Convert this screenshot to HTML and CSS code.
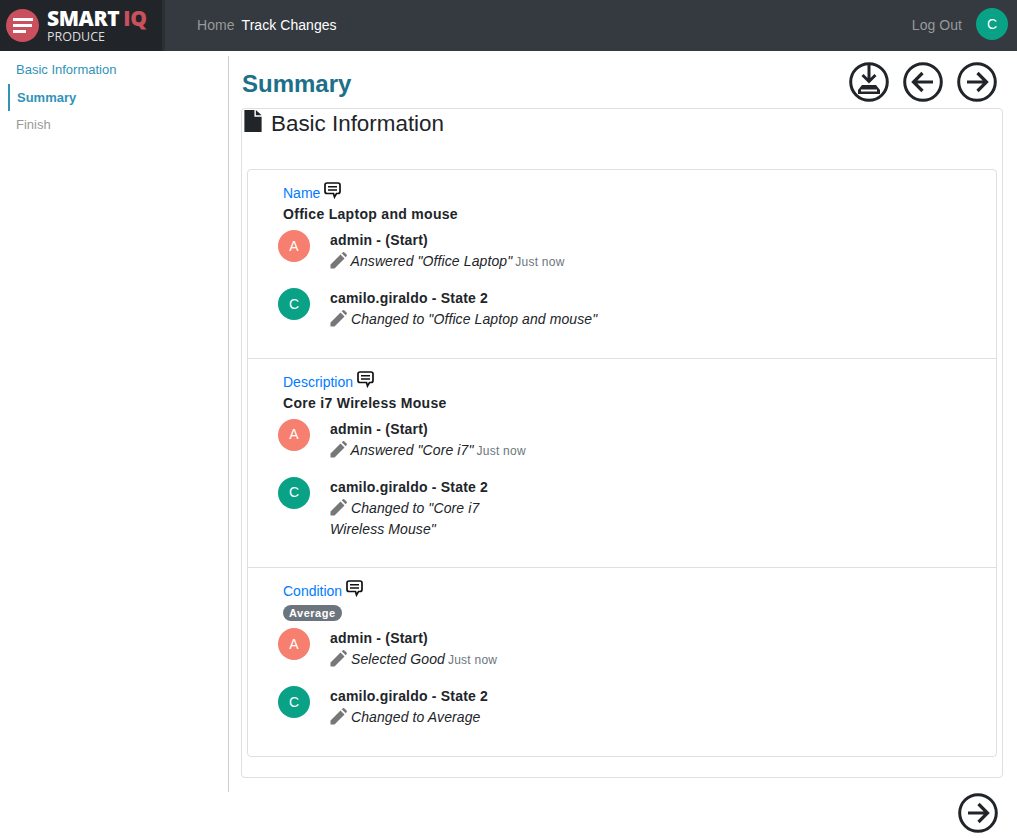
FILE: index.html
```html
<!DOCTYPE html>
<html lang="en">
<head>
<meta charset="utf-8">
<title>Track Changes</title>
<link rel="stylesheet" href="styles.css">
</head>
<body>
<svg class="defs" width="0" height="0" aria-hidden="true">
  <symbol id="i-next" viewBox="0 0 40 40">
    <circle cx="20" cy="20" r="18.3" fill="none" stroke="#212529" stroke-width="3"/>
    <path d="M10 20H29.500M20.500 11L29.500 20L20.500 29" fill="none" stroke="#212529" stroke-width="3.200"/>
  </symbol>
  <symbol id="i-prev" viewBox="0 0 40 40">
    <circle cx="20" cy="20" r="18.3" fill="none" stroke="#212529" stroke-width="3"/>
    <path d="M30 20H10.500M19.500 11L10.500 20L19.500 29" fill="none" stroke="#212529" stroke-width="3.200"/>
  </symbol>
  <symbol id="i-save" viewBox="0 0 40 40">
    <circle cx="20" cy="20" r="18.3" fill="none" stroke="#212529" stroke-width="3"/>
    <path d="M20 3V19M13.500 13L20 19.500L26.500 13" fill="none" stroke="#212529" stroke-width="3"/>
    <path d="M13 23H27L31 28V32H9V28Z" fill="#212529"/>
    <path d="M12 27.500H28V29.500H12Z" fill="#fff"/>
  </symbol>
  <symbol id="i-chat" viewBox="0 0 17 17">
    <path d="M3 1H14Q16 1 16 3V9.500Q16 11.500 14 11.500H12.500L10.500 15L9.500 11.500H3Q1 11.500 1 9.500V3Q1 1 3 1Z" fill="none" stroke="#111" stroke-width="1.700"/>
    <path d="M4 4.700H13M4 8H13" stroke="#111" stroke-width="1.500"/>
  </symbol>
  <symbol id="i-pencil" viewBox="0 0 17 17">
    <path d="M0.500 12.500L10.500 2.500L14.500 6.500L4.500 16.500H0.500ZM11.700 1.300L13 0.300Q13.700 -0.200 14.400 0.400L16.600 2.600Q17.200 3.300 16.700 4L15.700 5.300Z" fill="#777"/>
  </symbol>
</svg>

<header class="topbar">
  <div class="brand">
    <span class="brand-mark"><span></span><span></span><span></span></span>
    <span class="brand-text">
      <span class="brand-name">SMART<em>IQ</em></span>
      <span class="brand-sub">PRODUCE</span>
    </span>
  </div>
  <nav class="topnav">
    <a class="nav-link">Home</a>
    <a class="nav-link current">Track Changes</a>
  </nav>
  <div class="account">
    <a class="nav-link logout">Log Out</a>
    <span class="avatar avatar-c">C</span>
  </div>
</header>

<div class="layout">
  <aside class="sidebar">
    <a class="step">Basic Information</a>
    <a class="step active">Summary</a>
    <a class="step muted">Finish</a>
  </aside>

  <main class="content">
    <div class="title-row">
      <h1>Summary</h1>
      <div class="actions">
        <svg class="action"><use href="#i-save"/></svg>
        <svg class="action"><use href="#i-prev"/></svg>
        <svg class="action"><use href="#i-next"/></svg>
      </div>
    </div>

    <section class="panel">
      <h2>
        <svg class="doc-icon" viewBox="0 0 18 23"><path d="M0 0H10.500V7H18V23H0ZM12 0L18 5.500H12Z" fill="#212529"/></svg>
        Basic Information
      </h2>

      <div class="card">
        <article class="field">
          <div class="field-label">Name <svg class="chat"><use href="#i-chat"/></svg></div>
          <div class="field-value">Office Laptop and mouse</div>
          <div class="change">
            <span class="avatar avatar-a">A</span>
            <div>
              <div class="who">admin - (Start)</div>
              <div class="what"><svg class="pencil"><use href="#i-pencil"/></svg> Answered "Office Laptop" <small>Just now</small></div>
            </div>
          </div>
          <div class="change">
            <span class="avatar avatar-c">C</span>
            <div>
              <div class="who">camilo.giraldo - State 2</div>
              <div class="what"><svg class="pencil"><use href="#i-pencil"/></svg> Changed to "Office Laptop and mouse"</div>
            </div>
          </div>
        </article>

        <article class="field">
          <div class="field-label">Description <svg class="chat"><use href="#i-chat"/></svg></div>
          <div class="field-value">Core i7 Wireless Mouse</div>
          <div class="change">
            <span class="avatar avatar-a">A</span>
            <div>
              <div class="who">admin - (Start)</div>
              <div class="what"><svg class="pencil"><use href="#i-pencil"/></svg> Answered "Core i7" <small>Just now</small></div>
            </div>
          </div>
          <div class="change">
            <span class="avatar avatar-c">C</span>
            <div>
              <div class="who">camilo.giraldo - State 2</div>
              <div class="what"><svg class="pencil"><use href="#i-pencil"/></svg> Changed to "Core i7<br>Wireless Mouse"</div>
            </div>
          </div>
        </article>

        <article class="field">
          <div class="field-label">Condition <svg class="chat"><use href="#i-chat"/></svg></div>
          <div class="field-value"><span class="badge">Average</span></div>
          <div class="change">
            <span class="avatar avatar-a">A</span>
            <div>
              <div class="who">admin - (Start)</div>
              <div class="what"><svg class="pencil"><use href="#i-pencil"/></svg> Selected Good <small>Just now</small></div>
            </div>
          </div>
          <div class="change">
            <span class="avatar avatar-c">C</span>
            <div>
              <div class="who">camilo.giraldo - State 2</div>
              <div class="what"><svg class="pencil"><use href="#i-pencil"/></svg> Changed to Average</div>
            </div>
          </div>
        </article>
      </div>
    </section>

    <div class="bottom-actions">
      <svg class="action"><use href="#i-next"/></svg>
    </div>
  </main>
</div>
</body>
</html>
```

FILE: styles.css
```css
* { box-sizing: border-box; }

html, body { margin: 0; padding: 0; }

body {
  font-family: "Liberation Sans", Arial, sans-serif;
  font-size: 14px;
  line-height: 21px;
  color: #212529;
  background: #fff;
  overflow: hidden;
}

.defs { position: absolute; }

/* top bar */
.topbar {
  display: flex;
  align-items: center;
  height: 51px;
  background: #343a40;
}

.brand {
  display: flex;
  align-items: center;
  width: 165px;
  height: 51px;
  padding-left: 6px;
  background: #212529;
  border-right: 3px solid #2b3035;
}

.brand-mark {
  display: flex;
  flex-direction: column;
  align-items: flex-start;
  justify-content: center;
  gap: 3px;
  width: 33px;
  height: 33px;
  padding-left: 7px;
  margin-top: -1px;
  border-radius: 50%;
  background: #c9505c;
}

.brand-mark span { display: block; height: 3px; background: #fff; width: 20px; }
.brand-mark span:nth-child(2) { width: 19px; }
.brand-mark span:nth-child(3) { width: 13px; }

.brand-text {
  display: flex;
  flex-direction: column;
  margin-left: 8px;
  margin-top: -2px;
  color: #fff;
}

.brand-name {
  font-family: "Open Sans", sans-serif;
  font-weight: 800;
  font-size: 21px;
  line-height: 24px;
  letter-spacing: -0.4px;
}

.brand-name em {
  font-style: normal;
  color: #c9505c;
  margin-left: 4px;
}

.brand-sub {
  font-family: "Open Sans", sans-serif;
  font-size: 12.500px;
  line-height: 14px;
  color: #ddd;
}

.topnav {
  display: flex;
  gap: 7px;
  margin-left: 32px;
}

.nav-link { color: #999; letter-spacing: 0.05px; }
.nav-link.current { color: #fff; }
.nav-link.logout { margin-top: 2px; }

.account {
  display: flex;
  align-items: center;
  gap: 14px;
  margin-left: auto;
  margin-right: 9px;
  margin-top: -3px;
}

.avatar {
  display: flex;
  align-items: center;
  justify-content: center;
  flex: none;
  width: 32px;
  height: 32px;
  border-radius: 50%;
  color: #fff;
  font-size: 14px;
}

.avatar-a { background: #f67f6f; }
.avatar-c { background: #0aa287; }

/* page body */
.layout { display: flex; align-items: flex-start; }

.sidebar {
  flex: none;
  width: 229px;
  height: 736px;
  margin-top: 5px;
  padding-left: 8px;
  border-right: 1px solid #ccc;
  font-size: 13px;
}

.step {
  display: block;
  height: 27px;
  line-height: 27px;
  padding-left: 8px;
  color: #3193b8;
}

.step.active {
  margin-top: 1px;
  padding-left: 7px;
  border-left: 2px solid #3193b8;
  font-weight: 700;
}

.step.muted { color: #999; }

.content {
  flex: 1;
  min-width: 0;
  padding: 11px 14px 0 12px;
}

.title-row {
  display: flex;
  align-items: center;
  justify-content: space-between;
  height: 40px;
  padding-right: 6px;
}

h1 {
  margin: 2px 0 0 1px;
  font-size: 24px;
  line-height: 29px;
  font-weight: 700;
  color: #1d6f8a;
}

.actions { display: flex; gap: 14px; }

.action {
  display: block;
  width: 40px;
  height: 40px;
}

.panel {
  height: 670px;
  margin-top: 6px;
  padding: 0 5px;
  border: 1px solid #dfdfdf;
  border-radius: 4px;
}

h2 {
  display: flex;
  align-items: flex-start;
  height: 60px;
  margin: 0;
  font-size: 22.400px;
  line-height: 29px;
  font-weight: 400;
}

.doc-icon {
  flex: none;
  width: 18px;
  height: 22px;
  margin: 1px 9px 0 -3px;
}

.card {
  border: 1px solid #dfdfdf;
  border-radius: 4px;
}

.field {
  height: 188.600px;
  padding: 13px 0 0 35px;
  border-bottom: 1px solid #dfdfdf;
}

.field:nth-child(2) { height: 209.600px; }
.field:last-child { height: 187.600px; border-bottom: 0; }

.field-label {
  display: flex;
  align-items: flex-start;
  gap: 3.500px;
  height: 21px;
  color: #007bff;
}

.chat {
  flex: none;
  width: 17px;
  height: 17px;
  margin-top: -1px;
}

.field-value {
  height: 21px;
  font-weight: 700;
  letter-spacing: 0.3px;
}

.badge {
  display: inline-block;
  vertical-align: top;
  margin-top: 3px;
  padding: 0 6px;
  height: 16px;
  line-height: 16px;
  font-size: 11px;
  letter-spacing: 0.5px;
  color: #fff;
  background: #6c757d;
  border-radius: 8px;
}

.change {
  display: flex;
  gap: 20px;
  margin: 5px 0 16px -5px;
}

.who {
  font-weight: 700;
  letter-spacing: 0.2px;
}

.what {
  font-style: italic;
  letter-spacing: 0.1px;
}

.what small {
  margin-left: -1px;
  font-style: normal;
  font-size: 12px;
  line-height: 1;
  letter-spacing: 0.25px;
  color: #6c757d;
}

.pencil {
  width: 17px;
  height: 17px;
  vertical-align: -2px;
  margin-bottom: -1px;
}

.bottom-actions {
  display: flex;
  justify-content: flex-end;
  margin-top: 15px;
  padding-right: 5px;
}
```
